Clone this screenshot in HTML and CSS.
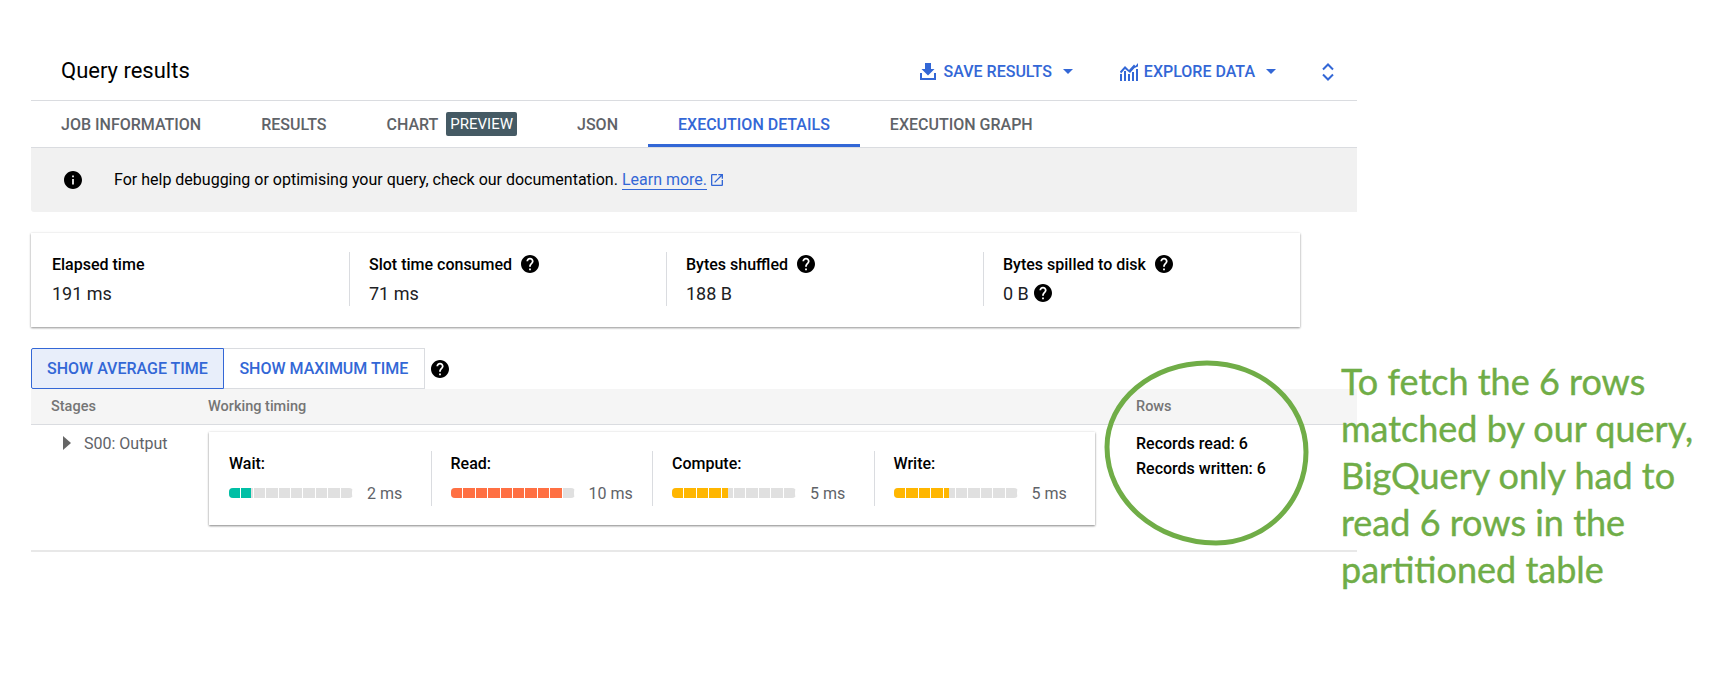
FILE: index.html
```html
<!DOCTYPE html>
<html>
<head>
<meta name="viewport" content="width=device-width, initial-scale=1">
<link rel="stylesheet" href="styles.css">
</head>
<body>

<svg class="defs" width="0" height="0">
  <symbol id="help" viewBox="2 2 20 20"><path d="M12 2C6.48 2 2 6.48 2 12s4.48 10 10 10 10-4.48 10-10S17.52 2 12 2zm1 17h-2v-2h2v2zm2.07-7.75l-.9.92C13.45 12.9 13 13.5 13 15h-2v-.5c0-1.1.45-2.1 1.17-2.83l1.24-1.26c.37-.36.59-.86.59-1.41 0-1.1-.9-2-2-2s-2 .9-2 2H8c0-2.21 1.79-4 4-4s4 1.79 4 4c0 .88-.36 1.68-.93 2.25z"/></symbol>
</svg>

<div class="panel">
  <!-- Title row -->
  <div class="header">
    <div class="title">Query results</div>
    <div class="actions">
      <a class="action action-save">
        <svg class="icon-save" viewBox="0 0 16 17"><path d="M5 0h6v6h3.500L8 12.500 1.500 6H5zM0 10h2v5h12v-5h2v7H0z"/></svg>
        SAVE RESULTS
        <span class="caret"></span>
      </a>
      <a class="action action-explore">
        <svg class="icon-explore" viewBox="0 0 18 18"><path d="M0 11h2v7H0zM4 8h2v10H4zM8 11h2v7H8zM12 9h2v9h-2zM16 6h2v12h-2zM0 8.500L5 3l4 4 5-5.500 1.500 1.500 2.500-3v3.500L14.500 5 10 10 5 6 1 10.500z"/></svg>
        EXPLORE DATA
        <span class="caret"></span>
      </a>
      <svg class="icon-expand" viewBox="0 0 12 18"><path d="M1 6.500L6 1.500l5 5M1 11.500l5 5 5-5" fill="none" stroke-width="2"/></svg>
    </div>
  </div>

  <!-- Tabs -->
  <div class="tabs">
    <div class="tab">JOB INFORMATION</div>
    <div class="tab">RESULTS</div>
    <div class="tab">CHART <span class="badge">PREVIEW</span></div>
    <div class="tab">JSON</div>
    <div class="tab active">EXECUTION DETAILS</div>
    <div class="tab">EXECUTION GRAPH</div>
  </div>

  <!-- Info banner -->
  <div class="banner">
    <svg class="icon-info" viewBox="2 2 20 20"><path d="M12 2C6.48 2 2 6.48 2 12s4.480 10 10 10 10-4.480 10-10S17.520 2 12 2zm1 15h-2v-6h2v6zm0-8h-2V7h2v2z"/></svg>
    <span>For help debugging or optimising your query, check our documentation.</span>
    <a class="learn">Learn more.</a>
    <svg class="icon-open" viewBox="3 3 18 18"><path d="M19 19H5V5h7V3H5c-1.110 0-2 .9-2 2v14c0 1.100.89 2 2 2h14c1.100 0 2-.9 2-2v-7h-2v7zM14 3v2h3.590l-9.830 9.830 1.410 1.410L19 6.410V10h2V3h-7z"/></svg>
  </div>

  <!-- Summary numbers -->
  <div class="stats">
    <div class="stat">
      <div class="stat-label">Elapsed time</div>
      <div class="stat-value">191 ms</div>
    </div>
    <div class="stat">
      <div class="stat-label">Slot time consumed <svg class="help"><use href="#help"/></svg></div>
      <div class="stat-value">71 ms</div>
    </div>
    <div class="stat">
      <div class="stat-label">Bytes shuffled <svg class="help"><use href="#help"/></svg></div>
      <div class="stat-value">188 B</div>
    </div>
    <div class="stat">
      <div class="stat-label">Bytes spilled to disk <svg class="help"><use href="#help"/></svg></div>
      <div class="stat-value">0 B <svg class="help help-value"><use href="#help"/></svg></div>
    </div>
  </div>

  <!-- Average / maximum switch -->
  <div class="toggle-row">
    <div class="toggle selected">SHOW AVERAGE TIME</div>
    <div class="toggle">SHOW MAXIMUM TIME</div>
    <svg class="help help-toggle"><use href="#help"/></svg>
  </div>

  <!-- Stages table -->
  <div class="table-head">
    <div class="col-stage">Stages</div>
    <div class="col-timing">Working timing</div>
    <div class="col-rows">Rows</div>
  </div>
  <div class="table-row">
    <div class="stage-name"><span class="arrow"></span>S00: Output</div>
    <div class="timing-card">
      <div class="timing timing-wait">
        <div class="timing-label">Wait:</div>
        <div class="timing-data">
          <div class="bar"><div class="fill" style="width: 18%"></div></div>
          <span>2 ms</span>
        </div>
      </div>
      <div class="timing timing-read">
        <div class="timing-label">Read:</div>
        <div class="timing-data">
          <div class="bar"><div class="fill" style="width: 90%"></div></div>
          <span>10 ms</span>
        </div>
      </div>
      <div class="timing timing-compute">
        <div class="timing-label">Compute:</div>
        <div class="timing-data">
          <div class="bar"><div class="fill" style="width: 45%"></div></div>
          <span>5 ms</span>
        </div>
      </div>
      <div class="timing timing-write">
        <div class="timing-label">Write:</div>
        <div class="timing-data">
          <div class="bar"><div class="fill" style="width: 45%"></div></div>
          <span>5 ms</span>
        </div>
      </div>
    </div>
    <div class="records">
      <div>Records read: 6</div>
      <div>Records written: 6</div>
    </div>
  </div>
</div>

<!-- Annotation drawn on top of the screenshot -->
<svg class="circle" viewBox="0 0 210 190">
  <path d="M103 3C48 3 3 41 3 87C3 140 52 183 112 183C162 183 202 142 202 92C202 43 158 3 103 3Z"/>
</svg>
<div class="note">To fetch the 6 rows<br>matched by our query,<br>BigQuery only had to<br>read 6 rows in the<br>partitioned table</div>

</body>
</html>
```

FILE: styles.css
```css
body {
    margin: 0;
    background: #fff;
    font-family: Roboto, sans-serif;
    font-size: 16px;
    color: #000;
}

a {
    color: #3367d6;
}

.defs {
    position: absolute;
}

.panel {
    width: 1326px;
    margin-left: 31px;
    padding-top: 40px;
}

/* Title row */
.header {
    display: flex;
    align-items: center;
    justify-content: space-between;
    height: 60px;
    padding-left: 30px;
    border-bottom: 1px solid #dadce0;
}

.title {
    font-size: 22px;
}

.actions {
    display: flex;
    align-items: center;
    padding: 3px 23px 0 0;
}

.action {
    display: flex;
    align-items: center;
    font-weight: 500;
}

.action-save {
    margin-right: 47px;
}

.action-explore {
    margin-right: 46px;
}

.icon-save {
    width: 16px;
    height: 17px;
    margin-right: 8px;
    fill: #3367d6;
}

.icon-explore {
    width: 18px;
    height: 18px;
    margin-right: 6px;
    fill: #3367d6;
}

.icon-expand {
    width: 12px;
    height: 18px;
    stroke: #3367d6;
}

.caret {
    width: 0;
    height: 0;
    margin-left: 11px;
    border-left: 5px solid transparent;
    border-right: 5px solid transparent;
    border-top: 5px solid #3367d6;
}

/* Tabs */
.tabs {
    display: flex;
    height: 46px;
    border-bottom: 1px solid #dadce0;
}

.tab {
    display: flex;
    align-items: center;
    padding: 0 30px;
    font-weight: 500;
    color: #5f6368;
    box-sizing: border-box;
    height: 46px;
}

.tab.active {
    color: #3367d6;
    border-bottom: 3px solid #3367d6;
    padding-top: 3px;
}

.badge {
    margin-left: 8px;
    padding: 0 4px;
    height: 24px;
    line-height: 24px;
    border-radius: 2px;
    background: #455a64;
    color: #fff;
    font-size: 15px;
    font-weight: 400;
}

/* Info banner */
.banner {
    display: flex;
    align-items: center;
    height: 63px;
    padding: 0 0 1px 33px;
    background: #f1f1f1;
    border-radius: 0 0 0 3px;
}

.icon-info {
    width: 18px;
    height: 18px;
    margin-right: 32px;
}

.learn {
    margin-left: 4px;
    border-bottom: 1px solid #3367d6;
}

.icon-open {
    width: 12px;
    height: 12px;
    margin-left: 4px;
    fill: #3367d6;
}

/* Summary numbers */
.stats {
    display: flex;
    width: 1269px;
    height: 94px;
    margin-top: 21px;
    padding-bottom: 2px;
    align-items: center;
    box-sizing: border-box;
    background: #fff;
    box-shadow: 0 1px 2px rgba(0, 0, 0, .4), 0 0 3px rgba(0, 0, 0, .08);
}

.stat {
    width: 317.500px;
    height: 54px;
    box-sizing: border-box;
    padding-left: 19px;
    border-left: 1px solid #dadce0;
}

.stat:first-child {
    width: 318.500px;
    padding-left: 21px;
    border-left: none;
}

.stat-label {
    display: flex;
    align-items: center;
    height: 24px;
    font-weight: 500;
}

.stat-value {
    display: flex;
    align-items: center;
    height: 30px;
    margin-top: 2px;
    font-size: 18px;
    color: #202124;
}

.help {
    width: 18px;
    height: 18px;
    margin-left: 9px;
}

.help-value {
    margin-left: 5px;
}

.help-toggle {
    margin-left: 6px;
}

/* Average / maximum switch */
.toggle-row {
    display: flex;
    align-items: center;
    margin-top: 21px;
}

.toggle {
    display: flex;
    align-items: center;
    justify-content: center;
    height: 41px;
    box-sizing: border-box;
    padding: 0 15.500px;
    border: 1px solid #dadce0;
    border-left: none;
    font-weight: 500;
    color: #3367d6;
}

.toggle.selected {
    padding: 0 15px;
    border: 1px solid #3367d6;
    background: #e8eefa;
    border-radius: 2px 0 0 2px;
}

/* Stages table */
.table-head {
    display: flex;
    align-items: center;
    height: 35px;
    background: #f5f5f5;
    border-bottom: 1px solid #dadce0;
    font-size: 14.500px;
    font-weight: 500;
    color: #757575;
}

.col-stage {
    width: 157px;
    padding-left: 20px;
}

.col-timing {
    width: 928px;
}

.table-row {
    display: flex;
    height: 125px;
    border-bottom: 2px solid #e8e8e8;
}

.stage-name {
    display: flex;
    align-items: center;
    align-self: flex-start;
    width: 146px;
    height: 14px;
    margin-top: 11px;
    padding-left: 32px;
    box-sizing: border-box;
    color: #5f6368;
}

.arrow {
    width: 0;
    height: 0;
    margin-right: 13px;
    border-top: 7px solid transparent;
    border-bottom: 7px solid transparent;
    border-left: 8px solid #666;
}

.timing-card {
    display: flex;
    align-items: center;
    width: 886px;
    height: 93px;
    margin: 7px 0 0 32px;
    background: #fff;
    box-shadow: 0 1px 2px rgba(0, 0, 0, .45), 0 0 3px rgba(0, 0, 0, .08);
}

.timing {
    width: 222px;
    height: 55px;
    box-sizing: border-box;
    padding-left: 19px;
    border-left: 1px solid #dadce0;
}

.timing:first-child {
    padding-left: 20px;
    border-left: none;
}

.timing-label {
    height: 26px;
    line-height: 26px;
    font-weight: 500;
}

.timing-data {
    display: flex;
    align-items: center;
    height: 24px;
    margin-top: 4px;
    color: #5f6368;
}

.bar {
    position: relative;
    width: 124px;
    height: 10px;
    margin-right: 14px;
    border-radius: 4px;
    overflow: hidden;
    background: #e0e0e0;
}

.fill {
    height: 100%;
}

/* White ticks that cut the bar into ten segments */
.bar:after {
    content: "";
    position: absolute;
    top: 0;
    left: 0;
    right: 0;
    bottom: 0;
    background: repeating-linear-gradient(90deg, transparent 0, transparent 11.4px, #fff 11.4px, #fff 12.4px);
}

.timing-wait .fill {
    background: #00bfa5;
}

.timing-read .fill {
    background: #ff7043;
}

.timing-compute .fill, .timing-write .fill {
    background: #ffb600;
}

.records {
    margin: 6px 0 0 41px;
    font-weight: 500;
    line-height: 25px;
}

/* Annotation */
.circle {
    position: absolute;
    left: 1104px;
    top: 360px;
    width: 210px;
    height: 190px;
    fill: none;
    stroke: #70ad47;
    stroke-width: 5px;
}

.note {
    position: absolute;
    left: 1341px;
    top: 358px;
    font-family: Lato, sans-serif;
    font-size: 36px;
    line-height: 47px;
    color: #70ad47;
    -webkit-text-stroke: .4px #70ad47;
    white-space: nowrap;
}
```
